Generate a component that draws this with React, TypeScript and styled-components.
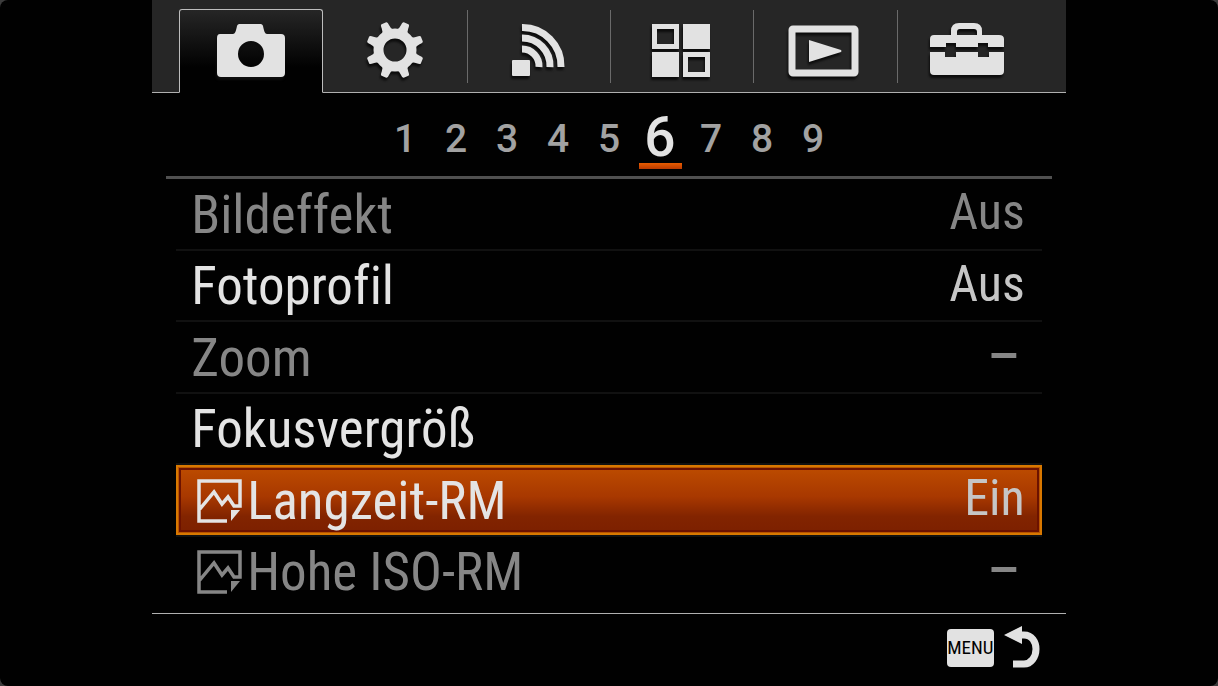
import React from "react";
import styled, { createGlobalStyle, css } from "styled-components";

const GlobalStyle = createGlobalStyle`
  *, *::before, *::after { box-sizing: border-box; }
  body {
    margin: 0;
    background: #3c3c3c;
    font-family: "Roboto Condensed", Roboto, "Liberation Sans", sans-serif;
    font-variant-ligatures: none;
  }
  button { font: inherit; color: inherit; background: none; border: 0; padding: 0; margin: 0; cursor: pointer; }
`;

const Page = styled.div`
  min-height: 100vh;
  background: #010101;
  border-radius: 8px;
  display: flex;
  justify-content: center;
`;

const Screen = styled.main`
  width: 75%;
  min-width: 720px;
  display: flex;
  flex-direction: column;
`;

const TabBar = styled.nav`
  display: grid;
  grid-template-columns: repeat(6, 1fr);
  padding: 9px 27px 0;
  background: #262626;
  border-bottom: 1px solid #b0b0b0;
`;

const Tab = styled.button<{ $active?: boolean; $divided?: boolean }>`
  height: 83px;
  display: flex;
  justify-content: center;
  padding-top: 10px;
  border: 1px solid transparent;
  color: #e2e2e2;

  ${(p) =>
    p.$divided &&
    css`
      background: linear-gradient(#6a6a6a, #6a6a6a) left 0 top 0 / 1px 73px no-repeat;
    `}

  ${(p) =>
    p.$active &&
    css`
      margin-bottom: -1px;
      height: 84px;
      border-color: #bdbdbd;
      border-bottom-color: #010101;
      border-radius: 3px 3px 0 0;
      background: linear-gradient(#262626, #010101 70%);
    `}
`;

const TabIcon = styled.svg`
  width: 80px;
  height: 60px;
  overflow: visible;
  filter: drop-shadow(-1px 3px 1px #0c0c0c);
`;

const Pager = styled.nav`
  height: 86px;
  margin: 0 14px;
  padding-bottom: 7px;
  border-bottom: 3px solid #505050;
  display: grid;
  grid-template-columns: repeat(9, 51px);
  justify-content: center;
  align-items: end;
`;

const PageButton = styled.button<{ $active?: boolean }>`
  height: 76px;
  padding: 26px 0 0;
  display: flex;
  flex-direction: column;
  align-items: center;
  font-family: Roboto, "Liberation Sans", sans-serif;
  font-size: 39px;
  line-height: 40px;
  font-weight: 500;
  color: #a2a2a2;

  ${(p) =>
    p.$active &&
    css`
      padding-top: 18px;
      font-size: 55px;
      line-height: 52px;
      color: #e2e2e2;

      &::after {
        content: "";
        flex: none;
        width: 43px;
        height: 6px;
        background: linear-gradient(#e85c00, #b83a00);
      }
    `}
`;

const SettingList = styled.ul`
  flex: 1;
  margin: 0 24px;
  padding: 0 0 5px;
  list-style: none;
  display: grid;
  grid-auto-rows: 1fr;
`;

const Item = styled.li`
  display: flex;
  border-bottom: 2px solid #111;

  &:last-child { border-bottom-color: transparent; }
`;

const SettingButton = styled.button<{ $selected?: boolean }>`
  flex: 1;
  min-height: 66px;
  padding: 0 17px 0 15px;
  display: flex;
  align-items: center;
  justify-content: space-between;
  color: #e4e4e4;

  &:disabled { color: #868686; cursor: default; }

  ${(p) =>
    p.$selected &&
    css`
      padding: 0 15px 0 13px;
      border: 2px solid #d87800;
      background: linear-gradient(#bd4c00, #a83800 45%, #822400 75%, #7c2000);
      box-shadow: inset 0 0 0 1px #b85400, inset 0 0 0 3px #6c1200;
    `}
`;

const Label = styled.span`
  padding-top: 2px;
  display: flex;
  align-items: center;
  gap: 5px;
  font-size: 53px;
  line-height: 62px;
  white-space: nowrap;
`;

const StillIcon = styled.svg`
  width: 46px;
  height: 46px;
  margin-left: 5px;
`;

const Value = styled.span<{ $muted?: boolean; $dash?: boolean }>`
  padding-bottom: 3px;
  font-size: 50px;
  line-height: 58px;
  color: ${(p) => (p.$muted ? "#868686" : "#c6c6c6")};

  ${(p) =>
    p.$dash &&
    css`
      padding: 0 7px 10px 0;
      font-family: "Liberation Sans", Arial, sans-serif;
      font-weight: 700;
    `}
`;

const Footer = styled.footer`
  height: 73px;
  padding: 0 26px 5px 0;
  border-top: 1px solid #b0b0b0;
  display: flex;
  align-items: center;
  justify-content: flex-end;
`;

const BackButton = styled.button`
  display: flex;
  align-items: center;
  gap: 10px;
  color: #e2e2e2;
`;

const MenuKey = styled.span`
  width: 47px;
  height: 38px;
  border-radius: 4px;
  background: #e2e2e2;
  color: #010101;
  font-size: 19px;
  line-height: 38px;
  text-align: center;
`;

const BackIcon = styled.svg`
  width: 36px;
  height: 44px;
`;

const CameraGlyph = () => (
  <path
    fill="currentColor"
    fillRule="evenodd"
    d="M9 14h13c2 0 3-3 4-8 .5-1.500 1.500-2 3-2h20c1.500 0 2.500.5 3 2 1 5 2 8 4 8h14q4 0 4 4v35q0 4-4 4H10q-4 0-4-4V18q0-4 3-4zM40 21a13 13 0 1 0 0 26a13 13 0 1 0 0-26z"
  />
);

const GearGlyph = () => (
  <g fill="none" stroke="currentColor">
    <circle cx="41" cy="30" r="16.500" strokeWidth="10" />
    {[22.5, 67.5, 112.5, 157.5, 202.5, 247.5, 292.5, 337.5].map((a) => (
      <path
        key={a}
        fill="currentColor"
        stroke="none"
        transform={`rotate(${a} 41 30)`}
        d="M34.500 11Q37 9 37 5Q37 1 38.500 1H43.500Q45 1 45 5Q45 9 47.500 11z"
      />
    ))}
  </g>
);

const WirelessGlyph = () => (
  <>
    <g fill="none" stroke="currentColor" strokeWidth="7">
      <path d="M25 29A17 17 0 0 1 42 47" />
      <path d="M25 18A28 28 0 0 1 53 47" />
      <path d="M25 7.500A38.500 38.500 0 0 1 64 47" />
    </g>
    <rect x="15" y="40" width="18" height="16" rx="1" fill="currentColor" />
  </>
);

const AppsGlyph = () => (
  <g fill="currentColor">
    <path fillRule="evenodd" d="M11 4h27v25H11zM16 9v15h17V9z" />
    <rect x="42" y="4" width="27" height="25" />
    <rect x="11" y="32" width="27" height="25" />
    <path fillRule="evenodd" d="M42 32h27v25H42zM47 37v15h17V37z" />
  </g>
);

const PlaybackGlyph = () => (
  <>
    <rect x="8" y="9" width="63" height="44" rx="1" fill="none" stroke="currentColor" strokeWidth="7" strokeLinejoin="round" />
    <path fill="currentColor" d="M25 20L57 30Q58 31 57 32L25 42z" />
  </>
);

const ToolboxGlyph = () => (
  <g fill="currentColor">
    <path
      fillRule="evenodd"
      d="M3 27V19q0-4 4-4h17V11q0-8 8-8h15q8 0 8 8v4h17q5 0 5 4v8H61v-4H51v4H29v-4H19v4zM30 15h20v-3q0-3-3-3H33q-3 0-3 3z"
    />
    <path d="M3 32h15v5h11v-5h22v5h11v-5h15v19q0 4-4 4H7q-4 0-4-4z" />
  </g>
);

const tabs = [
  { name: "Kamera", Glyph: CameraGlyph },
  { name: "Benutzereinstellungen", Glyph: GearGlyph },
  { name: "Drahtlos", Glyph: WirelessGlyph },
  { name: "Applikation", Glyph: AppsGlyph },
  { name: "Wiedergabe", Glyph: PlaybackGlyph },
  { name: "Setup", Glyph: ToolboxGlyph },
];

const StillImage = () => (
  <StillIcon viewBox="0 0 46 46" aria-hidden="true">
    <path fill="none" stroke="currentColor" strokeWidth="3.500" d="M31 43H3V3H44V28H38L32 19L26 26L18 14L3 32" />
    <path fill="currentColor" d="M35 32h9l-9 11z" />
  </StillIcon>
);

type Setting = { label: string; value?: string; disabled?: boolean; selected?: boolean; still?: boolean };

const settings: Setting[] = [
  { label: "Bildeffekt", value: "Aus", disabled: true },
  { label: "Fotoprofil", value: "Aus" },
  { label: "Zoom", value: "–", disabled: true },
  { label: "Fokusvergröß" },
  { label: "Langzeit-RM", value: "Ein", selected: true, still: true },
  { label: "Hohe ISO-RM", value: "–", disabled: true, still: true },
];

const pages = [1, 2, 3, 4, 5, 6, 7, 8, 9];

export default function App() {
  const [tab, setTab] = React.useState(0);
  const [page, setPage] = React.useState(6);

  return (
    <Page>
      <GlobalStyle />
      <Screen>
        <TabBar>
          {tabs.map(({ name, Glyph }, i) => (
            <Tab
              key={name}
              aria-label={name}
              $active={i === tab}
              $divided={i !== tab && i > 0 && i - 1 !== tab}
              onClick={() => setTab(i)}
            >
              <TabIcon viewBox="0 0 80 60" aria-hidden="true">
                <Glyph />
              </TabIcon>
            </Tab>
          ))}
        </TabBar>

        <Pager>
          {pages.map((n) => (
            <PageButton key={n} $active={n === page} onClick={() => setPage(n)}>
              {n}
            </PageButton>
          ))}
        </Pager>

        <SettingList>
          {settings.map((s) => (
            <Item key={s.label}>
              <SettingButton disabled={s.disabled} $selected={s.selected}>
                <Label>
                  {s.still && <StillImage />}
                  {s.label}
                </Label>
                {s.value && (
                  <Value $muted={s.disabled} $dash={s.value === "–"}>
                    {s.value}
                  </Value>
                )}
              </SettingButton>
            </Item>
          ))}
        </SettingList>

        <Footer>
          <BackButton>
            <MenuKey>MENU</MenuKey>
            <BackIcon viewBox="0 0 36 44" aria-hidden="true">
              <path fill="none" stroke="currentColor" strokeWidth="7" d="M15 9H20C28 9 32 16 32 23C32 31 27 38 20 38H9" />
              <path fill="currentColor" d="M0 9L18 0V18z" />
            </BackIcon>
          </BackButton>
        </Footer>
      </Screen>
    </Page>
  );
}
